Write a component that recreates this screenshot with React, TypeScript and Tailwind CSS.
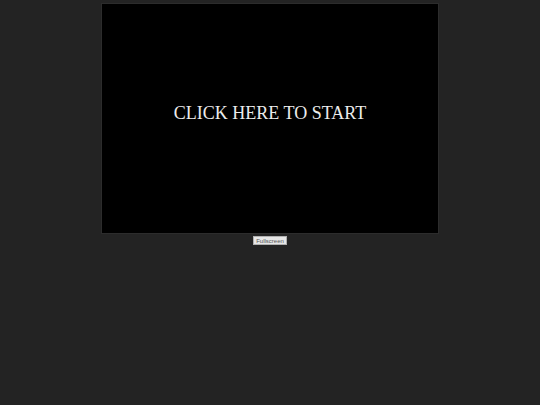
export default function App() {
  return (
    <main className="min-h-screen w-full bg-[#232323] flex flex-col items-center pt-[3px]">
      {/* game canvas */}
      <div className="w-[338px] h-[231px] bg-black border border-[#2c2c2c] flex items-center justify-center pb-[11px]">
        <span className="text-[#ececec] text-[18px] leading-none font-['Liberation_Serif',serif]">
          CLICK HERE TO START
        </span>
      </div>
      <button className="mt-[2px] h-[9px] px-[2px] bg-[#e6e6e6] border border-[#b0b0b0] text-[6px] leading-none text-[#555] font-['Liberation_Sans',sans-serif] flex items-center">
        Fullscreen
      </button>
    </main>
  );
}
